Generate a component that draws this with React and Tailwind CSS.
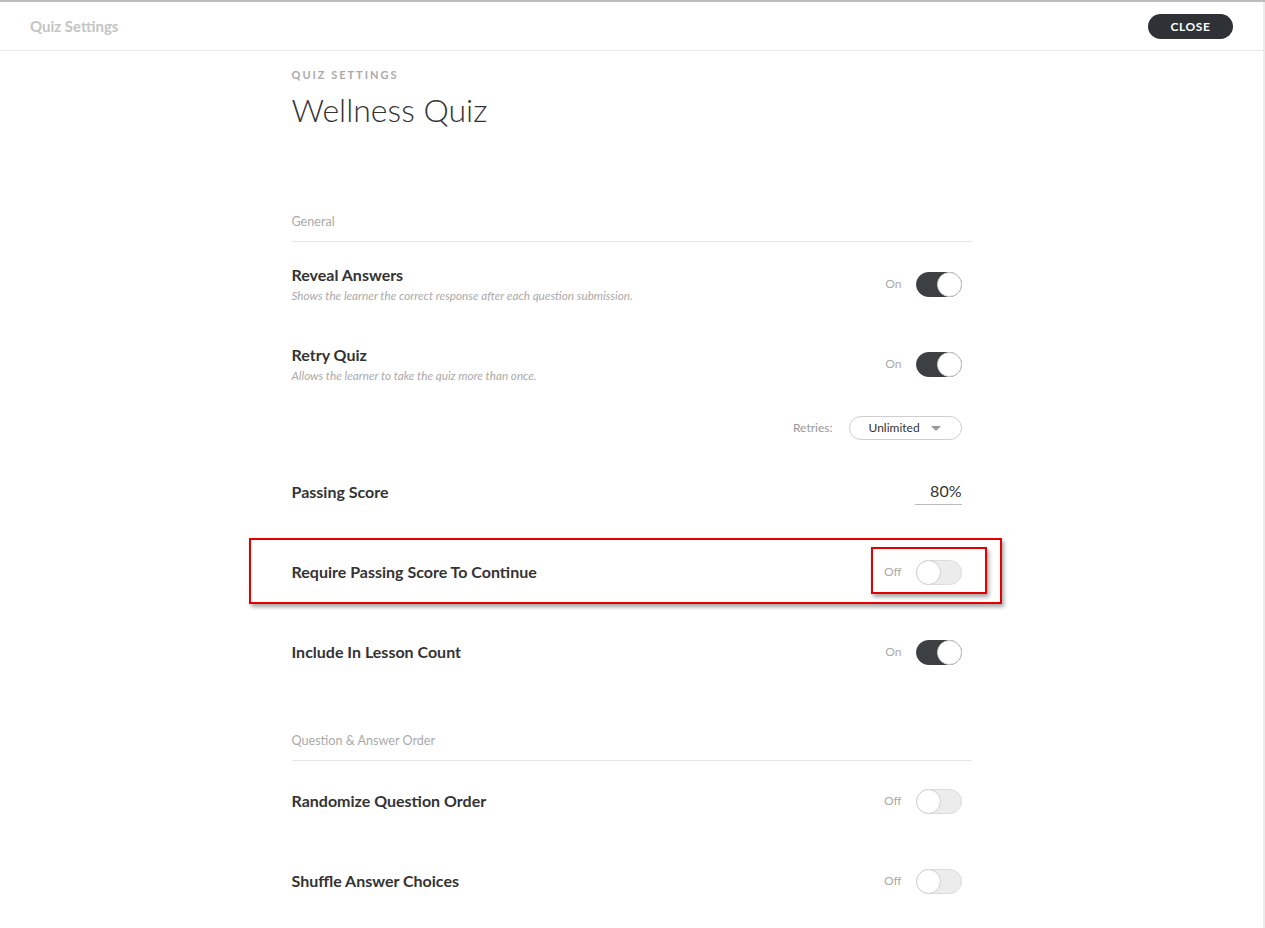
import { useState } from "react";

const Toggle = ({ on, onChange }) => (
	<div className="flex items-center">
		<span className="mr-[14px] text-[12px] text-[#aaa]">{on ? "On" : "Off"}</span>
		<button
			type="button"
			onClick={onChange}
			className={`relative h-[25px] w-[46px] rounded-full border ${
				on ? "border-[#3c4043] bg-[#3c4043]" : "border-[#dcdcdc] bg-[#ececec]"
			}`}>
			<span
				className={`absolute top-[-1px] h-[25px] w-[25px] rounded-full border border-[#cfcfcf] bg-white ${
					on ? "right-[-1px]" : "left-[-1px]"
				}`}
			/>
		</button>
	</div>
);

const SectionLabel = ({ children, className = "" }) => (
	<div className={`border-b border-[#e6e6e6] pb-[11px] text-[12.6px] leading-[16px] text-[#aaa] ${className}`}>
		{children}
	</div>
);

const Row = ({ title, sub, on, onToggle, children }) => (
	<div className="flex h-[80px] items-center justify-between pr-[10px]">
		<div className={sub ? "pb-[2px]" : ""}>
			<div className="text-[16px] font-bold leading-[20px] text-[#333]">{title}</div>
			{sub && <div className="mt-[3px] text-[11.7px] italic leading-[14px] text-[#aaa]">{sub}</div>}
		</div>
		{children ?? <Toggle on={on} onChange={onToggle} />}
	</div>
);

const App = () => {
	const [s, setS] = useState({
		reveal: true,
		retry: true,
		require: false,
		include: true,
		randomize: false,
		shuffle: false,
	});
	const flip = (k) => () => setS((p) => ({ ...p, [k]: !p[k] }));

	return (
		<div className="flex min-h-[928px] border-t-2 border-[#bdbdbd] bg-white font-[Lato,sans-serif]">
			<div className="flex-1">
				<header className="flex h-[49px] items-center justify-between border-b border-[#e8e8e8] px-[30px]">
					<span className="text-[15px] font-bold text-[#c4c4c4]">Quiz Settings</span>
					<button
						type="button"
						className="mt-[1px] h-[25px] w-[85px] rounded-full bg-[#2e3236] text-[12px] font-bold tracking-[0.6px] text-white">
						CLOSE
					</button>
				</header>

				<div className="mx-auto w-[680px] pt-[16px]">
					<div className="text-[11px] font-bold leading-[16px] tracking-[2px] text-[#aaa]">QUIZ SETTINGS</div>
					<h1 className="mt-[7px] text-[32px] font-light leading-[40px] text-[#333]">Wellness Quiz</h1>

					<SectionLabel className="mt-[84px]">General</SectionLabel>
					<div className="mt-[2px]">
						<Row
							title="Reveal Answers"
							sub="Shows the learner the correct response after each question submission."
							on={s.reveal}
							onToggle={flip("reveal")}
						/>
						<Row
							title="Retry Quiz"
							sub="Allows the learner to take the quiz more than once."
							on={s.retry}
							onToggle={flip("retry")}
						/>
						<div className="flex h-[48px] items-center justify-end pr-[10px]">
							<span className="mr-[16px] text-[12px] text-[#999]">Retries:</span>
							<div className="flex h-[24px] w-[113px] items-center rounded-full border border-[#cfcfcf] pl-[19px]">
								<span className="text-[12px] text-[#333]">Unlimited</span>
								<span className="ml-[11px] h-0 w-0 border-x-[5px] border-t-[5px] border-x-transparent border-t-[#999]" />
							</div>
						</div>
						<Row title="Passing Score">
							<div className="w-[47px] border-b border-[#bbb] pb-[1px] text-right text-[16px] text-[#333]">80%</div>
						</Row>
						<div className="relative">
							<div className="pointer-events-none absolute left-[-43px] right-[-30px] top-[6px] h-[66px] border-2 border-[#e30000] shadow-[2px_3px_4px_rgba(0,0,0,0.35)]" />
							<div className="pointer-events-none absolute left-[579px] right-[-15px] top-[15px] h-[47px] border-2 border-[#e30000] shadow-[2px_3px_4px_rgba(0,0,0,0.35)]" />
							<Row title="Require Passing Score To Continue" on={s.require} onToggle={flip("require")} />
						</div>
						<Row title="Include In Lesson Count" on={s.include} onToggle={flip("include")} />
					</div>

					<SectionLabel className="mt-[41px]">Question &amp; Answer Order</SectionLabel>
					<div>
						<Row title="Randomize Question Order" on={s.randomize} onToggle={flip("randomize")} />
						<Row title="Shuffle Answer Choices" on={s.shuffle} onToggle={flip("shuffle")} />
					</div>
				</div>
			</div>
			<div className="w-[2px] bg-[#ececec]" />
		</div>
	);
};

export default App;
